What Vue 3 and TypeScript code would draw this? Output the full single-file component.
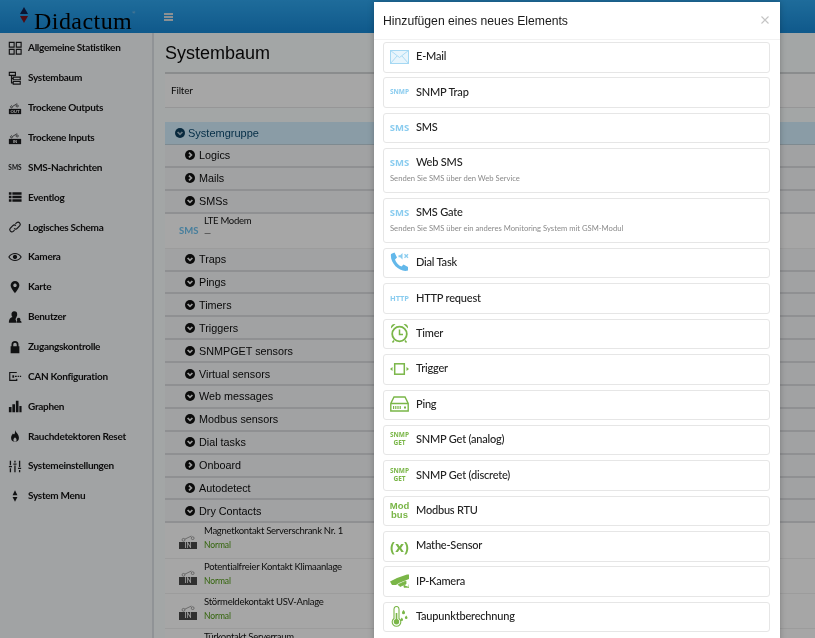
<script setup lang="ts">
type Shape = { d: string; fill?: boolean }
const s = (d: string): Shape => ({ d })
const f = (d: string): Shape => ({ d, fill: true })

const navIcons: Record<string, Shape[]> = {
  grid: [s('M1.500 1.500h5.500v5.500H1.500zM9.500 1.500h5.500v5.500H9.500zM1.500 9.500h5.500v5.500H1.500zM9.500 9.500h5.500v5.500H9.500z')],
  tree: [s('M1.500 1.500h7v3.500h-7zM6 7h8v3H6zM6 12h8v3H6zM4 5v8.500h2M4 8.500h2')],
  contactOut: [s('M4 5.500a1.200 1.200 0 1 0 .01 0M5.500 6L10.500 3M10.500 4.500a1.200 1.200 0 1 0 .01 0'), f('M1 9h14v6H1z')],
  contactIn: [s('M4 5.500a1.200 1.200 0 1 0 .01 0M5.500 6L10.500 3M10.500 4.500a1.200 1.200 0 1 0 .01 0'), f('M1 9h14v6H1z')],
  list: [f('M1 2.500h3v3H1zM5 2.500h10.500v3H5zM1 6.500h3v3H1zM5 6.500h10.500v3H5zM1 10.500h3v3H1zM5 10.500h10.500v3H5z')],
  link: [s('M7 9.500a2.500 2.500 0 0 0 3.500 0l3-3a2.500 2.500 0 0 0-3.500-3.500L8.500 4.500M9 6.500a2.500 2.500 0 0 0-3.500 0l-3 3a2.500 2.500 0 0 0 3.500 3.500l1.500-1.500')],
  eye: [s('M1 8s2.700-4 7-4 7 4 7 4-2.700 4-7 4-7-4-7-4z'), f('M8 5.500a2.500 2.500 0 1 0 .01 0z')],
  pin: [f('M8 1a5 5 0 0 0-5 5c0 3.500 5 9 5 9s5-5.500 5-9a5 5 0 0 0-5-5zm0 3a2 2 0 1 1-.01 0z')],
  user: [f('M7 1.500a3 3 0 0 0-3 3.500c0 1.500.7 2.500 1.300 3C3 8.700 1 10 1 14.500h8.500c0-1.500-.3-3-1-4.200.8-.7 1-1.300 1.100-2.300C10.200 7.300 10.500 6 10.500 5A3.400 3.400 0 0 0 7 1.500zM12 9a1.800 1.800 0 0 0-1.400 3c-.5.300-.8 1.300-.8 2.500H15.500c0-1.200-.6-2.200-1.800-2.500A1.800 1.800 0 0 0 12 9z')],
  lock: [f('M8 1a4 4 0 0 0-4 4v2H3v8h10V7h-1V5a4 4 0 0 0-4-4zM6 7V5a2 2 0 0 1 4 0v2z')],
  can: [s('M10 4H2v9h8v-2'), f('M5 7h2v3H5zM8 7.800h2v1.400H8zM11 7.800h1.500v1.400H11zM13.500 7.800H15v1.400h-1.500z')],
  graph: [f('M1 9h3v6H1zM5 6h3v9H5zM9 2h3v13H9zM13 8h2.500v7H13z')],
  flame: [f('M8 1c.5 2.500 4.500 4.500 4.500 9a4.500 4.500 0 0 1-9 0C3.500 7.500 5 6.500 5.500 5 6.500 6 7 6 7.200 6 8 4.500 8.300 3 8 1zm0 8.500c-1 1-1.800 1.800-1.800 3a1.800 1.800 0 0 0 3.600 0c0-1.200-.8-2-1.800-3z')],
  sliders: [f('M2 2h1.500v5H2zM1 8h3.500v1.500H1zM2 10.500h1.500V15H2zM7.200 2h1.500v2H7.200zM6.200 5h3.500v1.500H6.200zM7.200 7.500h1.500V15H7.200zM12.500 2h1.500v7h-1.500zM11.500 10h3.500v1.500h-3.500zM12.500 12.500h1.500V15h-1.500z')],
  system: [f('M8 1.500l2.800 5.500H5.200zM8 14.500L5.200 9h5.600z')],
}

const nav = [
  { t: 'Allgemeine Statistiken', i: 'grid' },
  { t: 'Systembaum', i: 'tree' },
  { t: 'Trockene Outputs', i: 'contactOut', tag: 'OUT' },
  { t: 'Trockene Inputs', i: 'contactIn', tag: 'IN' },
  { t: 'SMS-Nachrichten', i: 'sms' },
  { t: 'Eventlog', i: 'list' },
  { t: 'Logisches Schema', i: 'link' },
  { t: 'Kamera', i: 'eye' },
  { t: 'Karte', i: 'pin' },
  { t: 'Benutzer', i: 'user' },
  { t: 'Zugangskontrolle', i: 'lock' },
  { t: 'CAN Konfiguration', i: 'can' },
  { t: 'Graphen', i: 'graph' },
  { t: 'Rauchdetektoren Reset', i: 'flame' },
  { t: 'Systemeinstellungen', i: 'sliders' },
  { t: 'System Menu', i: 'system' },
]

const groupsA = [
  { t: 'Logics', open: false },
  { t: 'Mails', open: false },
  { t: 'SMSs', open: true },
]
const groupsB = [
  'Traps', 'Pings', 'Timers', 'Triggers', 'SNMPGET sensors', 'Virtual sensors',
  'Web messages', 'Modbus sensors', 'Dial tasks',
].map((t) => ({ t, open: true }))
  .concat([
    { t: 'Onboard', open: false },
    { t: 'Autodetect', open: false },
    { t: 'Dry Contacts', open: true },
  ])

const contacts = [
  'Magnetkontakt Serverschrank Nr. 1',
  'Potentialfreier Kontakt Klimaanlage',
  'Störmeldekontakt USV-Anlage',
  'Türkontakt Serverraum',
]

const items = [
  { t: 'E-Mail', k: 'mail' },
  { t: 'SNMP Trap', k: 'txt', lbl: ['SNMP'], cls: 'blue tiny' },
  { t: 'SMS', k: 'txt', lbl: ['SMS'], cls: 'blue mid' },
  { t: 'Web SMS', k: 'txt', lbl: ['SMS'], cls: 'blue mid', sub: 'Senden Sie SMS über den Web Service' },
  { t: 'SMS Gate', k: 'txt', lbl: ['SMS'], cls: 'blue mid', sub: 'Senden Sie SMS über ein anderes Monitoring System mit GSM-Modul' },
  { t: 'Dial Task', k: 'dial' },
  { t: 'HTTP request', k: 'txt', lbl: ['HTTP'], cls: 'blue small' },
  { t: 'Timer', k: 'timer' },
  { t: 'Trigger', k: 'trigger' },
  { t: 'Ping', k: 'ping' },
  { t: 'SNMP Get (analog)', k: 'txt', lbl: ['SNMP', 'GET'], cls: 'green tiny' },
  { t: 'SNMP Get (discrete)', k: 'txt', lbl: ['SNMP', 'GET'], cls: 'green tiny' },
  { t: 'Modbus RTU', k: 'txt', lbl: ['Mod', 'bus'], cls: 'green modbus' },
  { t: 'Mathe-Sensor', k: 'txt', lbl: ['(x)'], cls: 'green math' },
  { t: 'IP-Kamera', k: 'cam' },
  { t: 'Taupunktberechnung', k: 'dew' },
]
</script>

<template>
  <div class="page">
    <header class="top">
      <div class="brand">
        <svg class="mark" viewBox="0 0 10 16" width="10" height="16">
          <path d="M5 0l4 7H1z" fill="#10204f" />
          <path d="M5 16L1 9h8z" fill="#7a1420" />
        </svg>
        <span class="word">Didactum<sup class="reg">®</sup></span>
      </div>
      <svg class="burger" viewBox="0 0 9 8" width="9" height="8">
        <path d="M0 0h9v2H0zM0 3h9v2H0zM0 6h9v2H0z" fill="#d6dde2" />
      </svg>
    </header>

    <div class="body">
      <nav class="side">
        <a v-for="n in nav" :key="n.t" class="nav-item">
          <span class="nav-ico">
            <span v-if="n.i === 'sms'" class="sms-mini">SMS</span>
            <svg v-else viewBox="0 0 16 16" width="14" height="14">
              <path
                v-for="(p, idx) in navIcons[n.i]"
                :key="idx"
                :d="p.d"
                :fill="p.fill ? '#1b1c1e' : 'none'"
                :stroke="p.fill ? 'none' : '#1b1c1e'"
                :stroke-width="p.fill ? 0 : n.tag ? 0.8 : 1.300"
              />
              <text v-if="n.tag" class="tag" x="8" y="14">{{ n.tag }}</text>
            </svg>
          </span>
          <span class="nav-text">{{ n.t }}</span>
        </a>
      </nav>

      <main class="main">
        <h1 class="title">Systembaum</h1>
        <div class="filter">Filter</div>

        <div class="tree">
          <div class="root-row">
            <svg class="chev" viewBox="0 0 10 10" width="10" height="10">
              <circle cx="5" cy="5" r="5" fill="#0d3f5f" />
              <path d="M2.600 4l2.400 2.400L7.400 4" fill="none" stroke="#a3bccb" stroke-width="1.700" />
            </svg>
            <span>Systemgruppe</span>
          </div>

          <div v-for="g in groupsA" :key="g.t" class="row">
            <svg class="chev" viewBox="0 0 10 10" width="10" height="10">
              <circle cx="5" cy="5" r="5" fill="#111" />
              <path :d="g.open ? 'M2.600 4l2.400 2.400L7.400 4' : 'M4 2.600l2.400 2.400L4 7.400'" fill="none" stroke="#f3f4f5" stroke-width="1.700" />
            </svg>
            <span>{{ g.t }}</span>
          </div>

          <div class="sub modem">
            <span class="modem-ico">SMS</span>
            <div class="sub-text">
              <div class="sub-name">LTE Modem</div>
              <div class="sub-val">—</div>
            </div>
          </div>

          <div v-for="g in groupsB" :key="g.t" class="row">
            <svg class="chev" viewBox="0 0 10 10" width="10" height="10">
              <circle cx="5" cy="5" r="5" fill="#111" />
              <path :d="g.open ? 'M2.600 4l2.400 2.400L7.400 4' : 'M4 2.600l2.400 2.400L4 7.400'" fill="none" stroke="#f3f4f5" stroke-width="1.700" />
            </svg>
            <span>{{ g.t }}</span>
          </div>

          <div v-for="c in contacts" :key="c" class="sub contact">
            <span class="contact-ico">
              <svg viewBox="0 0 18 8" width="15" height="7">
                <circle cx="3" cy="5.600" r="1.700" fill="none" stroke="#777" stroke-width=".8" />
                <circle cx="14" cy="3.600" r="1.700" fill="none" stroke="#777" stroke-width=".8" />
                <path d="M4.600 4.800L12.500 1" fill="none" stroke="#777" stroke-width=".8" />
              </svg>
              <span class="in-tag">IN</span>
            </span>
            <div class="sub-text">
              <div class="sub-name">{{ c }}</div>
              <div class="sub-ok">Normal</div>
            </div>
          </div>
        </div>
      </main>
    </div>

    <div class="scrim"></div>

    <section class="modal">
      <div class="modal-head">
        <h2>Hinzufügen eines neues Elements</h2>
        <svg class="close" viewBox="0 0 8 8" width="8" height="8">
          <path d="M.5.500l7 7M7.500.500l-7 7" stroke="#c4c4c4" stroke-width="1.100" />
        </svg>
      </div>
      <div class="list">
        <div v-for="it in items" :key="it.t" class="opt" :class="{ tall: it.sub }">
          <span class="opt-line">
            <span class="opt-ico">
              <span v-if="it.k === 'txt'" class="lbl" :class="it.cls">
                <span v-for="l in it.lbl" :key="l">{{ l }}</span>
              </span>
              <svg v-else-if="it.k === 'mail'" viewBox="0 0 19 14" width="19" height="14">
                <rect x=".5" y=".5" width="18" height="13" fill="#e8f5fc" stroke="#a5d8f3" />
                <path d="M.5.500l9 7 9-7M.5 13.500l6.500-7.500M18.500 13.500L12 6" fill="none" stroke="#a5d8f3" stroke-width=".9" />
              </svg>
              <svg v-else-if="it.k === 'dial'" viewBox="0 0 19 22" width="19" height="22">
                <path d="M1 3l3.500-1.500 2.500 5-2 2c1 3 3.500 6 6.500 7l2-2 4.500 2.500v3.500c-8 2.500-18.500-7.500-17-16.500z" fill="#63b8ea" />
                <path d="M8.500 4.200h1.700L12.500 2v6.500l-2.300-2.200H8.500z" fill="#8accef" />
                <path d="M14.500 3.300l3.500 3.500M18 3.300l-3.500 3.500" stroke="#8accef" stroke-width="1.300" />
              </svg>
              <svg v-else-if="it.k === 'timer'" viewBox="0 0 19 20" width="19" height="20">
                <circle cx="9.500" cy="11" r="7.300" fill="none" stroke="#7ab648" stroke-width="1.800" />
                <path d="M9.500 6.500V11.500H13" fill="none" stroke="#7ab648" stroke-width="1.500" />
                <path d="M1 5.500C.5 2.500 2.500.5 5.500 1zM18 5.500C18.500 2.500 16.500.5 13.500 1z" fill="#7ab648" />
                <path d="M4 17.500l-1.500 2M15 17.500l1.500 2" stroke="#7ab648" stroke-width="1.500" />
              </svg>
              <svg v-else-if="it.k === 'trigger'" viewBox="0 0 19 12" width="19" height="12">
                <rect x="4.700" y=".8" width="9.600" height="10.400" fill="none" stroke="#7ab648" stroke-width="1.500" />
                <path d="M0 6l2.500-2v4zM19 6l-2.500-2v4z" fill="#7ab648" />
              </svg>
              <svg v-else-if="it.k === 'ping'" viewBox="0 0 19 16" width="19" height="16">
                <path d="M4 1h11l3.200 6.500V15H.8V7.500zM.8 7.500h17.400" fill="none" stroke="#7ab648" stroke-width="1.400" />
                <path d="M3 10h1.200v3H3zM5.200 10h1.200v3H5.200zM7.400 10h1.200v3H7.400zM9.600 10h1.200v3H9.600zM14 10.500h2v2h-2z" fill="#7ab648" />
              </svg>
              <svg v-else-if="it.k === 'cam'" viewBox="0 0 19 14" width="19" height="14">
                <path d="M0 7.500L7 4l10-3.500h2V5L9 9l-3 2H2z" fill="#7ab648" />
                <path d="M8 10.500l8-3.500v3l-6 2.500zM14 11v2.300h5M19 10.500V14" fill="#7ab648" stroke="#7ab648" stroke-width=".8" />
              </svg>
              <svg v-else-if="it.k === 'dew'" viewBox="0 0 17 21" width="17" height="21">
                <path d="M3 3a2.500 2.500 0 0 1 5 0v9.500a4.300 4.300 0 1 1-5 0z" fill="none" stroke="#7ab648" stroke-width="1.100" />
                <circle cx="5.500" cy="15.800" r="2.700" fill="#7ab648" />
                <path d="M4.700 7h1.600v8H4.700z" fill="#7ab648" />
                <path d="M12.500 4c1 1.300 1.500 2 1.500 2.700a1.500 1.500 0 0 1-3 0c0-.7.500-1.400 1.500-2.700zM15.200 9.500c.8 1 1.300 1.700 1.300 2.300a1.300 1.300 0 0 1-2.600 0c0-.6.500-1.300 1.300-2.300zM10.800 11.500c.7 1 1.200 1.600 1.200 2.200a1.200 1.200 0 0 1-2.400 0c0-.6.500-1.200 1.200-2.200z" fill="#7ab648" />
              </svg>
            </span>
            <span class="opt-name">{{ it.t }}</span>
          </span>
          <span v-if="it.sub" class="opt-sub">{{ it.sub }}</span>
        </div>
      </div>
    </section>
  </div>
</template>

<style>
html, body { margin: 0; padding: 0; overflow: hidden; }
</style>

<style scoped>
.page {
  position: relative;
  width: 815px;
  height: 638px;
  overflow: hidden;
  font-family: Lato, "Liberation Sans", sans-serif;
  background: #fbfdff;
  filter: blur(0.35px);
}
.top {
  height: 33px;
  display: flex;
  align-items: center;
  background: linear-gradient(#2fa6ee, #1889d6);
}
.brand {
  width: 154px;
  height: 33px;
  position: relative;
  flex: none;
}
.mark { position: absolute; left: 19px; top: 7px; }
.word {
  position: absolute;
  left: 34px;
  top: 6px;
  font-family: "Liberation Serif", serif;
  font-size: 24px;
  line-height: 30px;
  letter-spacing: 0.45px;
  color: #000;
  white-space: nowrap;
}
.reg {
  position: absolute;
  font-size: 4px;
  line-height: 4px;
  top: 5px;
  color: #c9d6df;
}
.burger { margin-left: 10px; }
.body { display: flex; height: 605px; }
.side {
  width: 154px;
  flex: none;
  box-sizing: border-box;
  border-right: 2px solid #dde2e6;
  background: #f8fafc;
  display: flex;
  flex-direction: column;
}
.nav-item {
  height: 29.87px;
  flex: none;
  display: flex;
  align-items: center;
  padding-left: 8px;
  color: #111;
  font-size: 10px;
  letter-spacing: -0.3px;
  font-weight: 700;
  white-space: nowrap;
}
.nav-text { margin-top: -1px; }
.nav-ico {
  width: 14px;
  height: 14px;
  margin-right: 6px;
  flex: none;
  display: flex;
  align-items: center;
  justify-content: center;
}
.tag {
  font-family: "Liberation Sans", sans-serif;
  font-size: 5px;
  font-weight: 700;
  fill: #f2f2f2;
  text-anchor: middle;
  letter-spacing: 0;
}
.sms-mini { font-size: 6.500px; letter-spacing: 0; font-weight: 700; color: #1b1c1e; }
.main {
  flex: 1;
  min-width: 0;
  padding-left: 11px;
  background: #fbffff;
}
.title {
  margin: 0;
  height: 39px;
  padding-top: 10px;
  box-sizing: border-box;
  font-family: "Liberation Sans", sans-serif;
  font-size: 18px;
  line-height: 21px;
  font-weight: 400;
  color: #0c0c0c;
}
.filter {
  height: 36px;
  box-sizing: border-box;
  border-top: 2px solid #d5d7d9;
  border-bottom: 1px solid #e6e7e8;
  background: #fff;
  padding: 9px 6px 0;
  font-size: 10px;
  letter-spacing: -0.2px;
  line-height: 14px;
  color: #111;
}
.tree { margin-top: 14px; font-family: "Liberation Sans", sans-serif; }
.root-row {
  height: 23px;
  display: flex;
  align-items: center;
  padding-left: 10px;
  box-sizing: border-box;
  background: #d4f0ff;
  border-bottom: 1px solid #c2d4de;
  font-size: 11px;
  color: #0c4a70;
}
.row {
  height: 22.900px;
  box-sizing: border-box;
  display: flex;
  align-items: center;
  padding-left: 20px;
  background: #f7f9fb;
  border-bottom: 2px solid #dcdee0;
  font-size: 10.800px;
  color: #0c0c0c;
}
.chev { margin-right: 4px; flex: none; }
.root-row .chev { margin-right: 3px; }
.sub {
  display: flex;
  background: #fff;
  border-bottom: 1px solid #f0f0f0;
  box-sizing: border-box;
  font-family: Lato, "Liberation Sans", sans-serif;
}
.modem { height: 35px; padding-left: 14px; align-items: center; }
.modem-ico {
  width: 25px;
  font-size: 9.500px;
  font-weight: 700;
  color: #6fc3f0;
  margin-top: -1px;
}
.sub-text { font-size: 9.500px; letter-spacing: -0.27px; line-height: 12px; color: #111; }
.modem .sub-text { margin-top: -7px; }
.sub-val { color: #555; font-size: 9px; }
.contact { height: 35.300px; padding: 2px 0 0 14px; }
.contact-ico {
  width: 25px;
  display: flex;
  flex-direction: column;
  align-items: flex-start;
  padding-top: 9.500px;
}
.contact-ico svg { margin-left: 2px; }
.in-tag {
  width: 18px;
  height: 7.500px;
  background: #4a4a4a;
  color: #f0f0f0;
  font-size: 6.500px;
  line-height: 7.500px;
  font-weight: 700;
  text-align: center;
}
.sub-name { line-height: 12px; }
.sub-ok {
  color: #4f9a12;
  font-size: 8.500px;
  letter-spacing: -0.1px;
  line-height: 12px;
  margin-top: 2px;
}
.scrim {
  position: absolute;
  inset: 0;
  background: rgba(0, 0, 0, 0.35);
}
.modal {
  position: absolute;
  left: 374px;
  top: 2px;
  width: 406px;
  height: 640px;
  background: #fff;
  box-shadow: 0 0 6px rgba(0, 0, 0, 0.25);
}
.modal-head {
  position: relative;
  height: 38px;
  box-sizing: border-box;
  border-bottom: 1px solid #f2f2f2;
  padding: 12px 9px 0;
}
.modal-head h2 {
  margin: 0;
  font-family: "Liberation Sans", sans-serif;
  font-size: 12.200px;
  line-height: 15px;
  font-weight: 400;
  color: #1a1a1a;
}
.close { position: absolute; right: 11px; top: 14px; }
.list {
  margin-top: 2px;
  padding: 0 10px 0 9px;
  display: flex;
  flex-direction: column;
  gap: 4.900px;
}
.opt {
  display: block;
  box-sizing: border-box;
  height: 30.500px;
  border: 1.500px solid #e6e6e6;
  border-radius: 3px;
  background: #fff;
  padding: 0 6px;
  flex: none;
}
.opt.tall { height: 45px; }
.opt-line {
  display: flex;
  align-items: center;
  height: 27px;
}
.tall .opt-line { height: 26px; }
.opt-ico {
  width: 19px;
  margin-right: 7px;
  flex: none;
  display: flex;
  align-items: center;
  justify-content: center;
}
.opt-name {
  font-size: 11px;
  letter-spacing: -0.2px;
  font-weight: 500;
  color: #222;
  white-space: nowrap;
  margin-top: -1.500px;
}
.opt-sub {
  display: block;
  margin-top: -2.500px;
  font-size: 7.650px;
  line-height: 11px;
  color: #8a8a8a;
  white-space: nowrap;
}
.lbl {
  display: flex;
  flex-direction: column;
  align-items: center;
  font-family: "Open Sans", sans-serif;
  font-weight: 700;
  white-space: nowrap;
}
.blue { color: #8accef; }
.green { color: #7ab648; }
.tiny { font-size: 6.500px; line-height: 8px; }
.small { font-size: 7.500px; }
.mid { font-size: 9.500px; margin-top: 1px; }
.modbus { font-family: "Liberation Sans", sans-serif; font-size: 9.500px; line-height: 9.500px; }
.math { font-size: 15px; line-height: 18px; }
</style>
